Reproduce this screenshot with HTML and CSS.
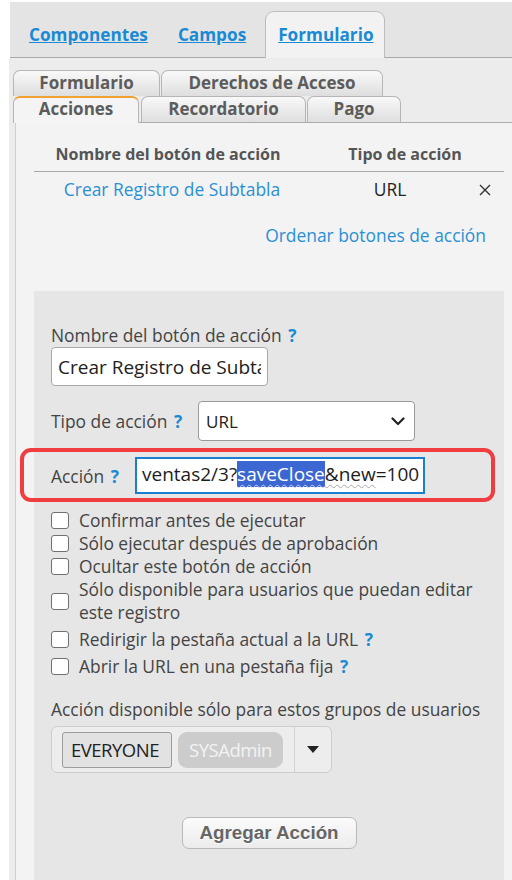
FILE: index.html
```html
<!DOCTYPE html>
<html lang="es">
<head>
<meta charset="utf-8">
<title>Acciones</title>
<link rel="stylesheet" href="styles.css">
</head>
<body>
<div class="page">
  <div class="topbar">
    <a class="toplink first" href="#">Componentes</a>
    <a class="toplink" href="#">Campos</a>
    <div class="toptab"><a class="toplink" href="#">Formulario</a></div>
  </div>
  <div class="main">
    <div class="subtabs">
      <div class="tabrow">
        <div class="stab t-form">Formulario</div>
        <div class="stab t-der">Derechos de Acceso</div>
      </div>
      <div class="tabrow">
        <div class="stab t-acc active">Acciones</div>
        <div class="stab t-rec">Recordatorio</div>
        <div class="stab t-pago">Pago</div>
      </div>
    </div>
    <div class="panel">
      <div class="table">
        <div class="th c1">Nombre del botón de acción</div>
        <div class="th c23">Tipo de acción</div>
        <div class="td c1 link">Crear Registro de Subtabla</div>
        <div class="td c2">URL</div>
        <div class="td c3"><svg width="12" height="12" viewBox="0 0 12 12"><path d="M1 1 L11 11 M11 1 L1 11" stroke="#333" stroke-width="1.4" fill="none"/></svg></div>
      </div>
      <div class="sortline"><a class="link" href="#">Ordenar botones de acción</a></div>

      <div class="formbox">
        <div class="label">Nombre del botón de acción <span class="help">?</span></div>
        <input class="textin" type="text" value="Crear Registro de Subtabla">

        <div class="row tipo">
          <span class="label">Tipo de acción <span class="help">?</span></span>
          <div class="select">
            <span>URL</span>
            <svg class="chev" width="14" height="9" viewBox="0 0 14 9"><path d="M1.5 1.5 L7 7 L12.5 1.5" fill="none" stroke="#222" stroke-width="2.2" stroke-linecap="round" stroke-linejoin="round"/></svg>
          </div>
        </div>

        <div class="row accion">
          <span class="label">Acción <span class="help">?</span></span>
          <div class="urlin"><span>ventas2/3?</span><span class="sel spell">saveClose</span><span class="spell">&amp;new</span><span>=100</span></div>
          <div class="redbox"></div>
        </div>

        <div class="checks">
          <div class="chk"><span class="box"></span><span>Confirmar antes de ejecutar</span></div>
          <div class="chk"><span class="box"></span><span>Sólo ejecutar después de aprobación</span></div>
          <div class="chk"><span class="box"></span><span>Ocultar este botón de acción</span></div>
          <div class="chk"><span class="box"></span><span>Sólo disponible para usuarios que puedan editar este registro</span></div>
          <div class="chk gap"><span class="box"></span><span>Redirigir la pestaña actual a la URL <span class="help">?</span></span></div>
          <div class="chk gap"><span class="box"></span><span>Abrir la URL en una pestaña fija <span class="help">?</span></span></div>
        </div>

        <div class="label groups">Acción disponible sólo para estos grupos de usuarios</div>
        <div class="multi">
          <div class="tags">
            <span class="tag on">EVERYONE</span>
            <span class="tag off">SYSAdmin</span>
          </div>
          <div class="drop"><svg width="12" height="7" viewBox="0 0 12 7"><path d="M0 0 H12 L6 7 Z" fill="#222"/></svg></div>
        </div>

        <div class="btnrow"><button class="btn" type="button">Agregar Acción</button></div>
      </div>
    </div>
  </div>
</div>
</body>
</html>
```
FILE: styles.css
```css
* { box-sizing: border-box; }
html, body { margin: 0; padding: 0; background: #ffffff; }
body { font-family: "Open Sans", "DejaVu Sans", sans-serif; color: #444; height: 880px; overflow: hidden; }

.page { padding-top: 2px; }

.topbar {
  margin-left: 10px;
  height: 56px;
  background: #e4e4e4;
  border-bottom: 1px solid #a9a9a9;
  display: flex;
  align-items: flex-end;
  padding-left: 19px;
}
.toplink {
  font-weight: 700;
  font-size: 17.2px;
  color: #1a8ad4;
  text-decoration: underline;
  height: 46px;
  display: flex;
  align-items: center;
  margin-right: 30px;
}
.toptab {
  height: 47px;
  margin-bottom: -1px;
  margin-left: -11px;
  width: 120px;
  padding-left: 12px;
  background: #f2f2f2;
  border: 1px solid #bcbcbc;
  border-bottom: none;
  border-radius: 9px 9px 0 0;
}
.toptab .toplink { margin-right: 0; height: 45px; }

.main {
  margin-left: 9px;
  background: #ececec;
  padding-top: 12px;
  padding-left: 4px;
  height: 822px;
}
.subtabs { display: flex; flex-direction: column; position: relative; z-index: 1; }
.tabrow { display: flex; gap: 1px; }
.stab {
  height: 26px;
  border: 1px solid #b6b6b6;
  border-bottom: none;
  border-radius: 7px 7px 0 0;
  background: linear-gradient(#f9f9f9, #dedede);
  font-weight: 700;
  font-size: 17px;
  color: #5c5c5c;
  text-align: center;
  line-height: 24px;
}
.t-form { width: 147px; }
.t-der { width: 222px; }
.t-acc { width: 126px; }
.t-rec { width: 165px; margin-left: 1px; }
.t-pago { width: 94px; }
.stab.active {
  background: #f4f4f4;
  border-top: 2px solid #f0a232;
  height: 27px;
  margin-bottom: -1px;
  line-height: 22px;
}

.panel {
  margin-left: 2px;
  background: #f3f3f3;
  border-left: 1px solid #cfcfcf;
  border-top: 1px solid #acacac;
  padding: 14px 8px 0 18px;
  height: 760px;
}

.table {
  display: grid;
  grid-template-columns: 272px 168px 30px;
}
.th {
  height: 35px;
  border-bottom: 1px solid #a8a8a8;
  font-weight: 700;
  font-size: 16px;
  color: #555;
  text-align: center;
  line-height: 34px;
}
.th.c1 { padding-right: 4px; }
.c23 { grid-column: 2 / span 2; }
.td {
  height: 35px;
  font-size: 17.4px;
  line-height: 34px;
  text-align: center;
  color: #222;
}
.td.c1 { padding-left: 4px; }
.td.c3 { display: flex; align-items: center; justify-content: center; padding-right: 8px; }
.link { color: #2a90d4; text-decoration: none; }
.sortline { text-align: right; padding-right: 18px; margin-top: 16px; font-size: 17.4px; line-height: 24px; }

.formbox {
  margin-top: 44px;
  background: #e6e6e6;
  padding: 33px 17px 0 17px;
  height: 600px;
}
.label { font-size: 17.4px; line-height: 22px; color: #444; }
.help { color: #1a8ad4; font-weight: 700; margin-left: 2px; }

.textin {
  display: block;
  margin-top: 1px;
  width: 217px;
  height: 39px;
  border: 1px solid #a9a9a9;
  border-radius: 4px;
  background: #fff;
  font-family: "Open Sans", sans-serif;
  font-size: 19px;
  color: #222;
  padding: 0 6px;
  outline: none;
}

.row { display: flex; align-items: center; position: relative; }
.tipo { margin-top: 15px; }
.tipo .label { width: 147px; }
.select {
  width: 217px;
  height: 40px;
  background: #fff;
  border: 1px solid #9a9a9a;
  border-radius: 4px;
  display: flex;
  align-items: center;
  justify-content: space-between;
  padding: 0 9px 0 7px;
  font-size: 17px;
  color: #222;
}
.accion { margin-top: 16px; }
.accion .label { width: 84px; }
.urlin {
  width: 290px;
  height: 37px;
  border: 2px solid #1b7fd1;
  background: #fff;
  font-size: 19px;
  line-height: 31px;
  color: #1d1d1d;
  padding-left: 5px;
  white-space: nowrap;
  overflow: hidden;
}
.sel { background: #3c67d2; color: #fff; }
.spell { text-decoration: underline wavy #a9a9a9; text-decoration-thickness: 1px; text-underline-offset: 3px; }
.sel.spell { text-decoration-color: #c9d4f2; }
.redbox {
  position: absolute;
  left: -31px;
  top: -9px;
  width: 475px;
  height: 54px;
  border: 4px solid #f03d3f;
  border-radius: 11px;
  pointer-events: none;
}

.checks { margin-top: 15px; }
.chk {
  display: flex;
  align-items: center;
  gap: 10px;
  font-size: 17.4px;
  line-height: 23px;
  color: #444;
}
.chk.gap { margin-top: 4px; }
.box {
  flex: none;
  width: 18px;
  height: 17px;
  border: 1.5px solid #707070;
  border-radius: 3px;
  background: #fff;
}

.groups { margin-top: 20px; line-height: 23px; }
.multi {
  margin-top: 5px;
  width: 281px;
  height: 47px;
  border: 1px solid #cdcdcd;
  border-radius: 6px;
  background: #ededed;
  display: flex;
}
.tags { flex: 1; display: flex; align-items: center; gap: 6px; padding-left: 10px; border-right: 1px solid #d2d2d2; }
.tag {
  height: 36px;
  display: flex;
  align-items: center;
  font-size: 18.5px;
  letter-spacing: -0.5px;
  padding: 0 8px;
}
.tag.on { width: 110px; background: #e2e2e2; border: 1px solid #9c9c9c; border-radius: 3px; color: #222; }
.tag.off { width: 105px; background: #cccccc; border-radius: 9px; color: #f3f3f3; justify-content: center; }
.drop { width: 36px; display: flex; align-items: center; justify-content: center; }

.btnrow { display: flex; justify-content: center; margin-top: 44px; }
.btn {
  width: 175px;
  height: 32px;
  border: 1px solid #b9b9b9;
  border-radius: 7px;
  background: linear-gradient(#fbfbfb, #ececec);
  font-family: "Liberation Sans", Arial, sans-serif;
  font-weight: 700;
  font-size: 18.8px;
  color: #666;
  text-shadow: 0 1px 0 #fff;
  padding: 0;
}
```
